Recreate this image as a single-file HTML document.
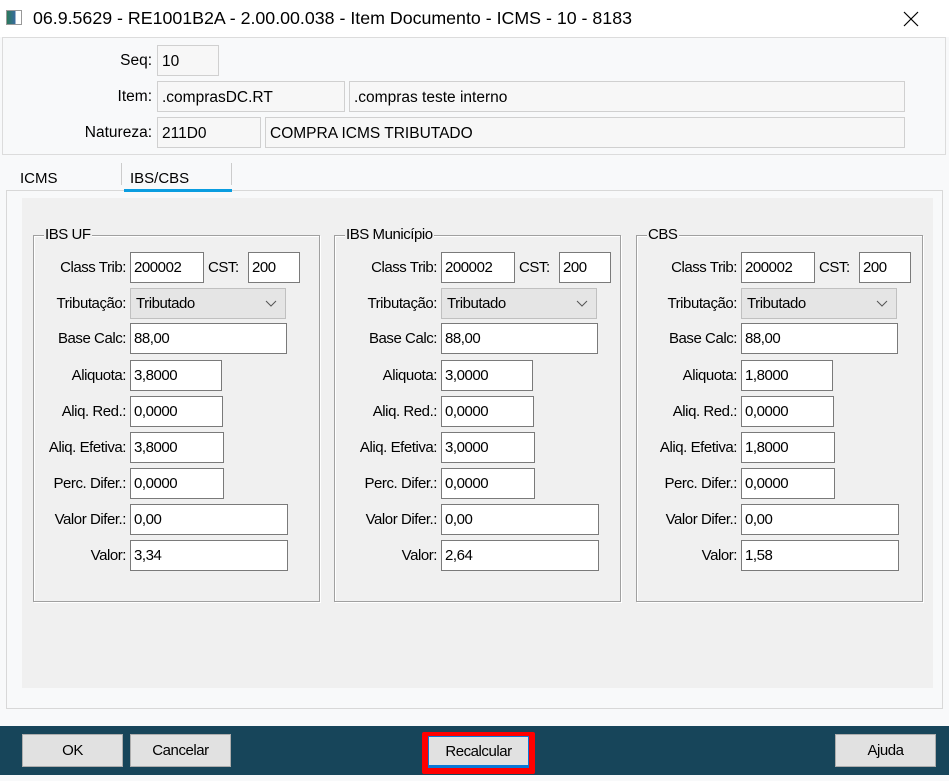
<!DOCTYPE html>
<html><head><meta charset="utf-8"><style>
*{box-sizing:border-box;margin:0;padding:0}
body{width:949px;height:781px;background:#f8f9fa;position:relative;overflow:hidden;font-family:"Liberation Sans",sans-serif;color:#000}
.a{position:absolute}
.title{left:0;top:0;width:949px;height:37px;background:#fff;font-size:17.8px;line-height:37px}
.hdr{left:2px;top:37px;width:944px;height:118px;border:1px solid #dcdcdc;background:#f8f9fa}
.hl{font-size:15.5px;text-align:right;width:150px}
.hb{border:1px solid #d0d0d0;background:#f7f7f7;font-size:15.5px;padding-left:4px;line-height:31px;height:31px}
.n{font-family:"Liberation Sans",sans-serif;font-size:15px;letter-spacing:-0.45px}
.grp{border:1px solid #a0a0a0;box-shadow:1px 1px 0 #fff inset, 1px 1px 0 #fff;height:367px;width:287px;top:235px}
.gt{top:-10px;left:10px;background:#f0f0f0;padding:0 1px;font-size:15px;line-height:18px}
.col{top:0}
.lb{left:-140px;width:136px;text-align:right;line-height:31px;height:31px}
.f{background:#fff;border:1px solid #7a7a7a;height:31px;line-height:29px;padding-left:3px}
.cb{background:#e5e5e5;border:1px solid #c0c0c0;height:31px;line-height:29px;padding-left:5px;width:156px}
.btn{background:#e1e1e1;border:1px solid #adadad;font-size:15px;text-align:center;line-height:31px;height:33px}
</style></head><body>
<div class="a title"><div class="a" style="left:6px;top:10px;width:16px;height:15px;border:1px solid #999;background:linear-gradient(90deg,#2a7a5a 0,#3a6aa0 60%,#fff 60%)"></div><span style="position:absolute;left:33px">06.9.5629 - RE1001B2A - 2.00.00.038 - Item Documento - ICMS - 10 - 8183</span>
<svg class="a" style="left:903px;top:11px" width="16" height="16"><path d="M1 1L15 15M15 1L1 15" stroke="#000" stroke-width="1.2"/></svg></div>
<div class="a hdr"></div>
<div class="a hl" style="left:2px;top:52px">Seq:</div><div class="a hb" style="left:157px;top:45px;width:62px">10</div>
<div class="a hl" style="left:2px;top:88px">Item:</div><div class="a hb" style="left:157px;top:81px;width:188px">.comprasDC.RT</div><div class="a hb" style="left:349px;top:81px;width:556px">.compras teste interno</div>
<div class="a hl" style="left:2px;top:124px">Natureza:</div><div class="a hb" style="left:157px;top:117px;width:104px">211D0</div><div class="a hb" style="left:265px;top:117px;width:640px">COMPRA ICMS TRIBUTADO</div>
<div class="a" style="left:6px;top:190px;width:937px;height:519px;border:1px solid #d8d8d8;background:#f8f9fa"></div>
<div class="a" style="left:22px;top:198px;width:911px;height:490px;background:#f0f0f0"></div>
<div class="a" style="left:20px;top:170px;font-size:15px">ICMS</div>
<div class="a" style="left:121px;top:163px;width:1px;height:22px;background:#ccc"></div>
<div class="a" style="left:231px;top:163px;width:1px;height:22px;background:#ccc"></div>
<div class="a" style="left:130px;top:170px;font-size:15px">IBS/CBS</div>
<div class="a" style="left:124px;top:189px;width:108px;height:3px;background:#0a9de0"></div>

<div class="a grp" style="left:33px"><div class="a gt n">IBS UF</div></div>
<div class="a grp" style="left:334px"><div class="a gt n">IBS Município</div></div>
<div class="a grp" style="left:636px"><div class="a gt n">CBS</div></div>

<div class="a col n" style="left:130px">
<div class="a lb" style="top:252px">Class Trib:</div><div class="a f" style="top:252px;left:0;width:74px">200002</div>
<div class="a" style="top:252px;left:78px;line-height:31px">CST:</div><div class="a f" style="top:252px;left:118px;width:52px">200</div>
<div class="a lb" style="top:288px">Tributação:</div><div class="a cb" style="top:288px;left:0">Tributado<svg class="a" style="right:8px;top:11px" width="12" height="8"><path d="M1 1L6 6L11 1" stroke="#555" fill="none"/></svg></div>
<div class="a lb" style="top:323px">Base Calc:</div><div class="a f" style="top:323px;left:0;width:157px">88,00</div>
<div class="a lb" style="top:360px">Aliquota:</div><div class="a f" style="top:360px;left:0;width:92px">3,8000</div>
<div class="a lb" style="top:396px">Aliq. Red.:</div><div class="a f" style="top:396px;left:0;width:93px">0,0000</div>
<div class="a lb" style="top:432px">Aliq. Efetiva:</div><div class="a f" style="top:432px;left:0;width:94px">3,8000</div>
<div class="a lb" style="top:468px">Perc. Difer.:</div><div class="a f" style="top:468px;left:0;width:94px">0,0000</div>
<div class="a lb" style="top:504px">Valor Difer.:</div><div class="a f" style="top:504px;left:0;width:158px">0,00</div>
<div class="a lb" style="top:540px">Valor:</div><div class="a f" style="top:540px;left:0;width:158px">3,34</div>
</div>

<div class="a col n" style="left:441px">
<div class="a lb" style="top:252px">Class Trib:</div><div class="a f" style="top:252px;left:0;width:74px">200002</div>
<div class="a" style="top:252px;left:78px;line-height:31px">CST:</div><div class="a f" style="top:252px;left:118px;width:52px">200</div>
<div class="a lb" style="top:288px">Tributação:</div><div class="a cb" style="top:288px;left:0">Tributado<svg class="a" style="right:8px;top:11px" width="12" height="8"><path d="M1 1L6 6L11 1" stroke="#555" fill="none"/></svg></div>
<div class="a lb" style="top:323px">Base Calc:</div><div class="a f" style="top:323px;left:0;width:157px">88,00</div>
<div class="a lb" style="top:360px">Aliquota:</div><div class="a f" style="top:360px;left:0;width:92px">3,0000</div>
<div class="a lb" style="top:396px">Aliq. Red.:</div><div class="a f" style="top:396px;left:0;width:93px">0,0000</div>
<div class="a lb" style="top:432px">Aliq. Efetiva:</div><div class="a f" style="top:432px;left:0;width:94px">3,0000</div>
<div class="a lb" style="top:468px">Perc. Difer.:</div><div class="a f" style="top:468px;left:0;width:94px">0,0000</div>
<div class="a lb" style="top:504px">Valor Difer.:</div><div class="a f" style="top:504px;left:0;width:158px">0,00</div>
<div class="a lb" style="top:540px">Valor:</div><div class="a f" style="top:540px;left:0;width:158px">2,64</div>
</div>

<div class="a col n" style="left:741px">
<div class="a lb" style="top:252px">Class Trib:</div><div class="a f" style="top:252px;left:0;width:74px">200002</div>
<div class="a" style="top:252px;left:78px;line-height:31px">CST:</div><div class="a f" style="top:252px;left:118px;width:52px">200</div>
<div class="a lb" style="top:288px">Tributação:</div><div class="a cb" style="top:288px;left:0">Tributado<svg class="a" style="right:8px;top:11px" width="12" height="8"><path d="M1 1L6 6L11 1" stroke="#555" fill="none"/></svg></div>
<div class="a lb" style="top:323px">Base Calc:</div><div class="a f" style="top:323px;left:0;width:157px">88,00</div>
<div class="a lb" style="top:360px">Aliquota:</div><div class="a f" style="top:360px;left:0;width:92px">1,8000</div>
<div class="a lb" style="top:396px">Aliq. Red.:</div><div class="a f" style="top:396px;left:0;width:93px">0,0000</div>
<div class="a lb" style="top:432px">Aliq. Efetiva:</div><div class="a f" style="top:432px;left:0;width:94px">1,8000</div>
<div class="a lb" style="top:468px">Perc. Difer.:</div><div class="a f" style="top:468px;left:0;width:94px">0,0000</div>
<div class="a lb" style="top:504px">Valor Difer.:</div><div class="a f" style="top:504px;left:0;width:158px">0,00</div>
<div class="a lb" style="top:540px">Valor:</div><div class="a f" style="top:540px;left:0;width:158px">1,58</div>
</div>

<div class="a" style="left:0;top:726px;width:949px;height:49px;background:#17455a"></div>
<div class="a btn n" style="left:22px;top:734px;width:101px">OK</div>
<div class="a btn n" style="left:130px;top:734px;width:101px">Cancelar</div>
<div class="a" style="left:422px;top:732px;width:113px;height:42px;background:#ff0000;border-radius:2px"></div>
<div class="a btn n" style="left:428px;top:736px;width:101px;height:32px;line-height:29px;border:1px solid #0a78d7;border-bottom:3px solid #0a78d7">Recalcular</div>
<div class="a btn n" style="left:835px;top:734px;width:101px">Ajuda</div>
</body></html>
